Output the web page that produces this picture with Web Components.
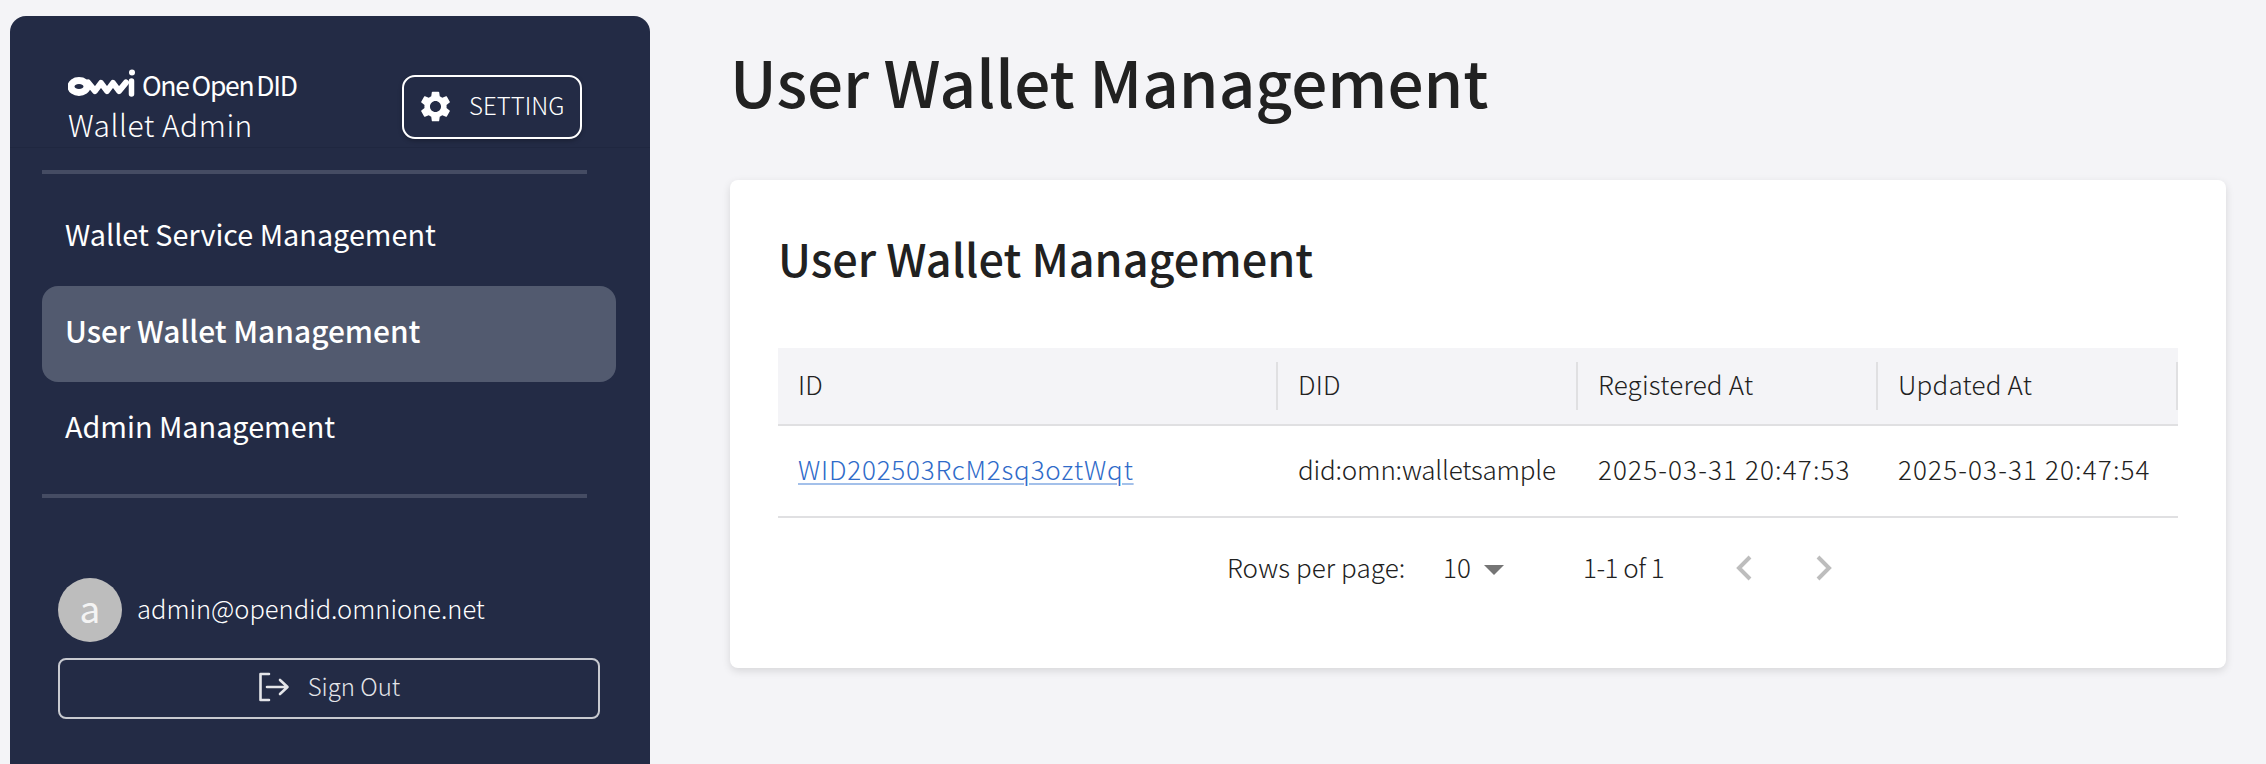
<!DOCTYPE html>
<html lang="en">
<head>
<meta charset="utf-8">
<title>User Wallet Management</title>
<style>
  html, body { margin: 0; height: 100%; }
  body { background: #f4f4f7; font-family: "Noto Sans CJK KR", "Noto Sans", sans-serif; overflow: hidden; }
</style>
</head>
<body>
<admin-shell>
  <admin-sidebar slot="side" email="admin@opendid.omnione.net">
    <nav-item>Wallet Service Management</nav-item>
    <nav-item active>User Wallet Management</nav-item>
    <nav-item>Admin Management</nav-item>
  </admin-sidebar>
  <page-title>User Wallet Management</page-title>
  <wallet-card heading="User Wallet Management">
    <wallet-table></wallet-table>
    <table-pager></table-pager>
  </wallet-card>
</admin-shell>

<script>
class AdminShell extends HTMLElement {
    constructor() {
        super();
        this.attachShadow({ mode: 'open' });
        this.shadowRoot.innerHTML = `
          <style>
            :host { display: flex; height: 764px; padding: 16px 40px 0 10px; box-sizing: border-box; }
            main { flex: 1; margin-left: 80px; min-width: 0; }
          </style>
          <slot name="side"></slot>
          <main><slot></slot></main>
        `;
    }
}

class AdminSidebar extends HTMLElement {
    constructor() {
        super();
        this.attachShadow({ mode: 'open' });
        this.shadowRoot.innerHTML = `
          <style>
            :host { display: block; width: 640px; flex: none; background: #232b45; border-radius: 16px 16px 0 0; color: #fff; }
            header { height: 132px; box-sizing: border-box; display: flex; align-items: flex-start; justify-content: space-between; padding: 50px 68px 0 58px; border-bottom: 1px solid #1f2740; }
            .brand { display: flex; flex-direction: column; }
            .logo { display: flex; align-items: flex-end; height: 34px; }
            .logo svg { display: block; width: 70px; height: 28px; margin-bottom: 3px; }
            .logo-text { font-size: 26.500px; line-height: 30px; margin-left: 4px; display: flex; gap: 3px; letter-spacing: -1.300px; white-space: nowrap; font-weight: 400; }
            .product { font-size: 30px; line-height: 40px; margin-top: 4px; letter-spacing: 0.5px; font-weight: 300; }
            .settings { display: flex; align-items: center; gap: 18px; box-sizing: border-box; width: 180px; height: 64px; margin-top: 9px; padding: 0 0 6px 13px; border: 2px solid #fff; border-radius: 13px; font-size: 24px; font-weight: 300; box-shadow: 0 2px 4px rgba(0,0,0,.25); }
            .settings svg { width: 37px; height: 37px; margin-right: -3px; margin-top: 5px; }
            hr { border: 0; height: 4px; background: #454c63; margin: 0 63px 0 32px; }
            .top { margin-top: 22px; }
            nav { padding: 16px 34px 16px 32px; display: flex; flex-direction: column; }
            .user { display: flex; align-items: center; gap: 15px; margin: 80px 0 16px 48px; font-size: 25.500px; font-weight: 300; }
            .email { margin-top: -5px; }
            .avatar { width: 64px; height: 64px; border-radius: 50%; background: #bdbdbd; color: #f4f4f4; display: flex; align-items: center; justify-content: center; box-sizing: border-box; padding-bottom: 6px; font-size: 37px; line-height: 1; font-weight: 400; }
            .sign-out { display: flex; align-items: center; justify-content: center; gap: 18px; box-sizing: border-box; margin-left: 48px; width: 542px; height: 61px; border: 2px solid #c8cad0; border-radius: 8px; color: #e4e5e9; font-size: 24px; font-weight: 300; }
            .sign-out svg { width: 32px; height: 30px; margin-top: -4px; }
            .sign-out span { margin-top: -6px; }
          </style>
          <header>
            <div class="brand">
              <div class="logo">
                <svg viewBox="0 0 70 28" aria-hidden="true">
                  <ellipse cx="11" cy="17.5" rx="8" ry="6" fill="none" stroke="#fff" stroke-width="7"/>
                  <path d="M20 13.5 L27 22 L33 14 L39 22 L45 14 L51 22 L58 13.5" fill="none" stroke="#fff" stroke-width="6" stroke-linecap="round" stroke-linejoin="round"/>
                  <path d="M63.500 12 V25" stroke="#fff" stroke-width="5.500" stroke-linecap="round"/>
                  <circle cx="64" cy="3.500" r="3" fill="#fff"/>
                </svg>
                <div class="logo-text"><span>One</span><span>Open</span><span>DID</span></div>
              </div>
              <div class="product">Wallet Admin</div>
            </div>
            <div class="settings">
              <svg viewBox="0 0 24 24" fill="#fff" aria-hidden="true"><path d="M19.14 12.94c.04-.3.06-.61.06-.94 0-.32-.02-.64-.07-.94l2.03-1.58c.18-.14.23-.41.12-.61l-1.92-3.32c-.12-.22-.37-.29-.59-.22l-2.39.96c-.5-.38-1.03-.7-1.62-.94l-.36-2.54c-.04-.24-.24-.41-.48-.41h-3.84c-.24 0-.43.17-.47.41l-.36 2.54c-.59.24-1.13.57-1.62.94l-2.39-.96c-.22-.08-.47 0-.59.22L2.74 8.87c-.12.21-.08.47.12.61l2.03 1.58c-.05.3-.09.63-.09.94s.02.64.07.94l-2.03 1.58c-.18.14-.23.41-.12.61l1.92 3.32c.12.22.37.29.59.22l2.39-.96c.5.38 1.03.7 1.62.94l.36 2.54c.05.24.24.41.48.41h3.84c.24 0 .44-.17.47-.41l.36-2.54c.59-.24 1.13-.56 1.62-.94l2.39.96c.22.08.47 0 .59-.22l1.92-3.32c.12-.22.07-.47-.12-.61l-2.01-1.58zM12 15.600c-1.980 0-3.600-1.620-3.600-3.600s1.620-3.600 3.600-3.600 3.600 1.620 3.600 3.600-1.620 3.600-3.600 3.600z"/></svg>
              <span>SETTING</span>
            </div>
          </header>
          <hr class="top">
          <nav><slot></slot></nav>
          <hr>
          <div class="user"><div class="avatar"></div><span class="email"></span></div>
          <div class="sign-out">
            <svg viewBox="0 0 32 30" fill="none" stroke="#e4e5e9" stroke-width="2.600" stroke-linecap="round" stroke-linejoin="round" aria-hidden="true"><path d="M11 2 H2.500 V28 H11"/><path d="M9 15 H29 M22 8 L29.500 15 L22 22"/></svg>
            <span>Sign Out</span>
          </div>
        `;
        const email = this.getAttribute('email');
        this.shadowRoot.querySelector('.email').innerText = email;
        this.shadowRoot.querySelector('.avatar').innerText = email.charAt(0);
    }
}

class NavItem extends HTMLElement {
    constructor() {
        super();
        this.attachShadow({ mode: 'open' });
        this.shadowRoot.innerHTML = `
          <style>
            :host { display: flex; align-items: center; height: 96px; padding: 0 23px 9px; box-sizing: border-box; border-radius: 16px; font-size: 28.800px; font-weight: 400; color: #fff; }
            :host([active]) { background: #525a6f; font-weight: 500; font-size: 29.900px; }
          </style>
          <slot></slot>
        `;
    }
}

class PageTitle extends HTMLElement {
    constructor() {
        super();
        this.attachShadow({ mode: 'open' });
        this.shadowRoot.innerHTML = `
          <style>
            :host { display: block; height: 164px; box-sizing: border-box; padding-top: 19px; font-size: 63.800px; line-height: 90px; font-weight: 500; color: #212121; }
          </style>
          <slot></slot>
        `;
    }
}

class WalletCard extends HTMLElement {
    constructor() {
        super();
        this.attachShadow({ mode: 'open' });
        this.shadowRoot.innerHTML = `
          <style>
            :host { display: block; height: 488px; box-sizing: border-box; padding: 48px; background: #fff; border-radius: 8px; box-shadow: 0 3px 8px rgba(0,0,0,.12); }
            h2 { margin: 0 0 60px; height: 60px; font-size: 45px; line-height: 60px; font-weight: 500; color: #212121; }
          </style>
          <h2></h2>
          <slot></slot>
        `;
        this.shadowRoot.querySelector('h2').innerText = this.getAttribute('heading');
    }
}

class WalletTable extends HTMLElement {
    constructor() {
        super();
        this.attachShadow({ mode: 'open' });
        this.shadowRoot.innerHTML = `
          <style>
            :host { display: grid; grid-template-columns: 500px 300px 300px 300px; font-size: 26px; font-weight: 300; color: #212121; }
            .th { position: relative; display: flex; align-items: center; height: 78px; padding: 0 0 6px 20px; box-sizing: border-box; background: #f4f4f7; border-bottom: 2px solid #e0e0e2; letter-spacing: .2px; }
            .th::after { content: ""; position: absolute; right: 0; top: 14px; height: 48px; width: 2px; background: #e0e0e2; }
            .td { display: flex; align-items: center; height: 92px; padding: 0 0 6px 20px; box-sizing: border-box; border-bottom: 2px solid #e0e0e2; white-space: nowrap; }
            .date { letter-spacing: 1.150px; }
            .did { letter-spacing: -.2px; }
            a { color: #2f6bc9; letter-spacing: .8px; text-decoration-color: #a3c0ea; text-decoration-thickness: 2px; text-underline-offset: 3px; }
          </style>
          <div class="th">ID</div><div class="th">DID</div><div class="th">Registered At</div><div class="th">Updated At</div>
          <div class="td"><a href="#">WID202503RcM2sq3oztWqt</a></div>
          <div class="td did">did:omn:walletsample</div>
          <div class="td date">2025-03-31 20:47:53</div>
          <div class="td date">2025-03-31 20:47:54</div>
        `;
    }
}

class TablePager extends HTMLElement {
    constructor() {
        super();
        this.attachShadow({ mode: 'open' });
        this.shadowRoot.innerHTML = `
          <style>
            :host { display: flex; align-items: center; height: 100px; padding: 0 0 4px 449px; box-sizing: border-box; font-size: 26px; font-weight: 300; color: #212121; white-space: nowrap; }
            .rows { width: 216px; letter-spacing: .1px; }
            .value { width: 41px; }
            .caret { width: 0; height: 0; border-left: 10px solid transparent; border-right: 10px solid transparent; border-top: 10px solid #757575; margin-top: 8px; }
            .range { margin-left: 79px; width: 149px; letter-spacing: -.5px; }
            svg { width: 24px; height: 32px; display: block; margin-right: 56px; margin-top: 4px; }
          </style>
          <span class="rows">Rows per page:</span>
          <span class="value">10</span>
          <span class="caret"></span>
          <span class="range">1-1 of 1</span>
          <svg viewBox="0 0 24 32" fill="none" stroke="#bdbdbd" stroke-width="4" aria-hidden="true"><path d="M18 5 L7 16 L18 27"/></svg>
          <svg viewBox="0 0 24 32" fill="none" stroke="#bdbdbd" stroke-width="4" aria-hidden="true"><path d="M6 5 L17 16 L6 27"/></svg>
        `;
    }
}

customElements.define('admin-shell', AdminShell);
customElements.define('admin-sidebar', AdminSidebar);
customElements.define('nav-item', NavItem);
customElements.define('page-title', PageTitle);
customElements.define('wallet-card', WalletCard);
customElements.define('wallet-table', WalletTable);
customElements.define('table-pager', TablePager);
</script>
</body>
</html>
